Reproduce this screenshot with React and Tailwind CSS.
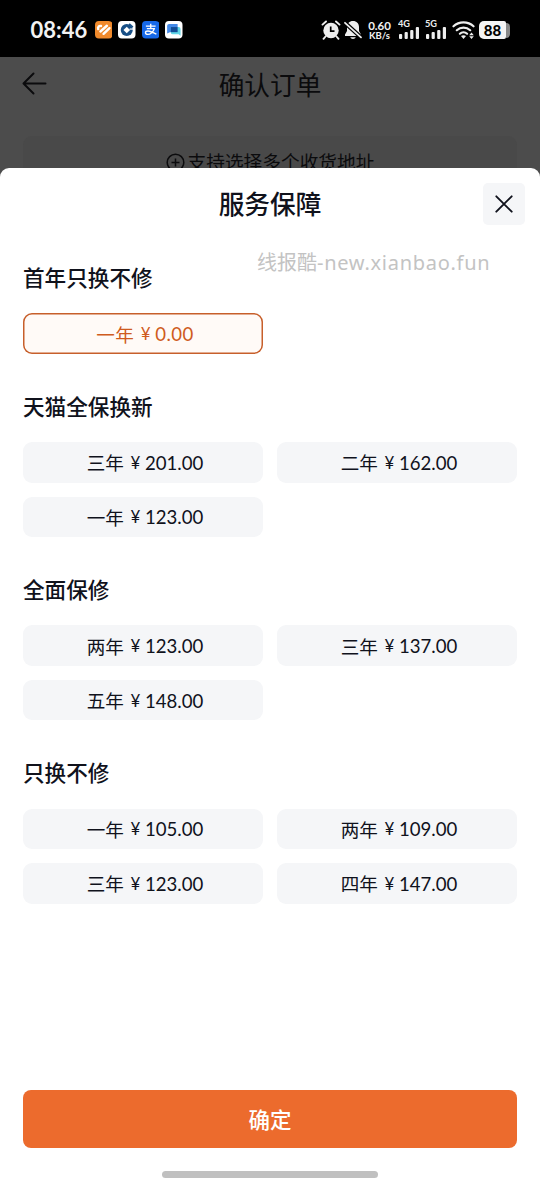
const groups = [
  { title: '首年只换不修', options: [['一年', '0.00']] },
  { title: '天猫全保换新', options: [['三年', '201.00'], ['二年', '162.00'], ['一年', '123.00']] },
  { title: '全面保修', options: [['两年', '123.00'], ['三年', '137.00'], ['五年', '148.00']] },
  { title: '只换不修', options: [['一年', '105.00'], ['两年', '109.00'], ['三年', '123.00'], ['四年', '147.00']] },
];

function AppIcons() {
  return (
    <div className="ml-[7px] flex gap-[6px]">
      <svg className="size-[17.5px]" viewBox="0 0 18 18">
        <rect width="18" height="18" rx="4" fill="#f08a2c" />
        <g fill="none" stroke="#fff" strokeWidth="2.500" strokeLinecap="round" strokeLinejoin="round">
          <path d="M3.300 8.300C2.600 6.200 4.200 4.600 6.200 5.100" />
          <path d="M5.600 10.800 12.200 4.900" />
          <path d="M8.800 13.200 14.900 7.400" />
        </g>
      </svg>
      <svg className="size-[17.5px]" viewBox="0 0 18 18">
        <rect width="18" height="18" rx="4" fill="#fff" />
        <circle cx="9" cy="9.200" r="6.200" fill="#174f86" />
        <path d="m9 5.800 3.400 3.400L9 12.600 5.600 9.200z" fill="#fff" />
        <path d="M12 8.300h4.200" stroke="#fff" strokeWidth="1.200" />
        <path d="m11.500 3 3.800 3.300" stroke="#174f86" strokeWidth="1.600" />
      </svg>
      <svg className="size-[17.5px]" viewBox="0 0 18 18">
        <rect width="18" height="18" rx="4" fill="#1769e8" />
        <path d="M4 5.200h10M9 2.800v5M5 7.900h7.600c-.9 3-3.900 5.900-6.700 5.900-3.100 0-3.200-3.500.3-3.500 2.700 0 5.300 1.800 8.600 3.200" fill="none" stroke="#fff" strokeWidth="1.400" />
      </svg>
      <svg className="size-[17.5px]" viewBox="0 0 18 18">
        <rect width="18" height="18" rx="4" fill="#fff" />
        <path d="M2.200 5a2 2 0 0 1 2-2H13v8.500H5l-2.800 1.300z" fill="#4389e8" />
        <path d="M6 6.200h8a2 2 0 0 1 2 2v7l-2-1.500H8a2 2 0 0 1-2-2z" fill="#62d7e8" />
        <path d="M6 6.200h7v5.300H6z" fill="#124d98" />
      </svg>
    </div>
  );
}

function Signal({ label }) {
  return (
    <svg className="h-[22px] w-[22px]" viewBox="0 0 22 22">
      <text x="0" y="8.300" fill="#eee" fontSize="9.200" fontWeight="700" fontFamily="Lato, sans-serif">{label}</text>
      <g fill="#eee">
        <rect x="1" y="15" width="3.200" height="5" rx="1" />
        <rect x="6.600" y="12.900" width="3.200" height="7.100" rx="1" />
        <rect x="12.200" y="10.900" width="3.200" height="9.100" rx="1" />
        <rect x="17.800" y="8" width="3.200" height="12" rx="1" />
      </g>
    </svg>
  );
}

function StatusBar() {
  return (
    <div className="flex h-[57px] shrink-0 items-center bg-black pt-[3px] text-[#f2f2f2]">
      <span className="ml-[30.500px] w-[57px] whitespace-nowrap font-['Lato'] text-[22px] leading-6 font-bold">08:46</span>
      <AppIcons />
      <div className="ml-auto flex items-center pr-[30px]">
        <svg className="h-[20px] w-[20px]" viewBox="0 0 20 20">
          <circle cx="10" cy="10.500" r="7.700" fill="#eee" />
          <path d="M1.500 4.600 5 1.500M18.500 4.600 15 1.500M4.500 16.500l-2 2.300M15.500 16.500l2 2.300" stroke="#eee" strokeWidth="1.900" strokeLinecap="round" />
          <path d="M9.700 6.500v4.600h3.800" fill="none" stroke="#000" strokeWidth="1.700" />
        </svg>
        <svg className="ml-[3px] h-[20px] w-[18px]" viewBox="0 0 18 20">
          <path d="M9 1c-3.600 0-6 2.500-6 6v4L1 14.500V16h16v-1.500L15 11V7c0-3.500-2.400-6-6-6zM6.300 17.300h5.400C11 19.500 7 19.500 6.300 17.300z" fill="#eee" />
          <path d="m1 2.800 16.500 15" stroke="#000" strokeWidth="4.200" />
          <path d="m1 2.800 16 14.500" stroke="#eee" strokeWidth="1.800" strokeLinecap="round" />
        </svg>
        <div className="ml-[5px] w-[26px] text-center font-['Lato'] font-bold">
          <div className="text-[11.500px] leading-[11px]">0.60</div>
          <div className="text-[9.500px] leading-[10px]">KB/s</div>
        </div>
        <div className="ml-[5px] flex gap-[5px]">
          <Signal label="4G" />
          <Signal label="5G" />
        </div>
        <svg className="ml-[5.500px] h-[20px] w-[23px]" viewBox="0 0 23 20">
          <g fill="none" stroke="#eee" strokeWidth="2.200" strokeLinecap="round">
            <path d="M1.500 6.300c5.600-5.200 14.400-5.200 20 0" />
            <path d="M4.800 10.200c3.900-3.500 9.500-3.500 13.400 0" />
            <path d="M7.900 13.700c2-1.800 5.200-1.800 7.200 0" />
          </g>
          <path d="M9 16c1.400-1 3.600-1 5 0l-2.500 3z" fill="#eee" />
          <path d="m19.500 12.400 2.300 2.900h-4.600zM19.500 19l2.300-2.800h-4.600z" fill="#eee" />
        </svg>
        <div className="ml-[4px] flex h-[18px] w-[31px] items-center">
          <div className="h-[18px] w-[27px] rounded-l-[5px] rounded-r-[2px] bg-[#f4f4f4] text-center font-['Lato'] text-[15px] leading-[18px] font-black text-black">88</div>
          <div className="h-[15px] w-[4px] rounded-r-[5px] bg-[#888]" />
        </div>
      </div>
    </div>
  );
}

function Option({ term, price, selected }) {
  return (
    <button
      className={
        selected
          ? 'flex h-[40.500px] items-center justify-center rounded-[9px] bg-[#fffaf7] pl-[4px] tracking-[0.400px] text-[#cf5b20] inset-ring-[1.500px] inset-ring-[#c75f2b]'
          : 'flex h-[40.500px] items-center justify-center rounded-[9px] bg-[#f5f6f8] pl-[4px] text-[#10121c]'
      }
    >
      <span className="text-[18.600px] leading-6">{term}</span>
      <span className="mt-px ml-[5.500px] w-[12px] text-center font-['Lato'] text-[17px] leading-6">¥</span>
      <span className="mt-px ml-[3.500px] font-['Lato'] text-[18.600px] leading-6">{price}</span>
    </button>
  );
}

export default function App() {
  return (
    <div className="flex h-[1188px] w-[540px] flex-col overflow-hidden bg-[#4c4c4c] font-['Noto_Sans_CJK_SC',sans-serif]">
      <StatusBar />
      <div className="h-[111px] shrink-0 overflow-hidden text-[#0b0b0d]">
        <header className="grid h-[54px] grid-cols-[60px_1fr_60px] items-center">
          <svg className="-mt-[2px] ml-[22px] size-[25px]" viewBox="0 0 25 25" fill="none" stroke="#0b0b0d" strokeWidth="2" strokeLinecap="round" strokeLinejoin="round">
            <path d="M23.500 12.500H1.500M11.500 2.500l-10 10 10 10" />
          </svg>
          <h1 className="-mt-px text-center text-[25.700px] leading-8">确认订单</h1>
        </header>
        <div className="mx-[23px] mt-[25px] flex h-[50px] items-center justify-center rounded-[9px] bg-[#494949]">
          <svg className="mt-[2px] size-[19px]" viewBox="0 0 19 19" fill="none" stroke="#0b0b0d" strokeWidth="1.500">
            <circle cx="9.500" cy="9.500" r="8.300" />
            <path d="M9.500 5.500v8M5.500 9.500h8" />
          </svg>
          <span className="ml-[3px] text-[18.700px] leading-6">支持选择多个收货地址</span>
        </div>
      </div>
      <main className="relative flex flex-1 flex-col rounded-t-[9px] bg-white px-[23px]">
        <div className="-mr-[8px] grid h-[72px] grid-cols-[34px_1fr_42px] items-center">
          <h2 className="col-start-2 -mt-[3px] text-center text-[25.700px] leading-8 font-medium text-[#10121c]">服务保障</h2>
          <button className="-mt-px flex size-[42px] items-center justify-center rounded-[5px] bg-[#f5f6f8]" aria-label="关闭">
            <svg className="size-[18px]" viewBox="0 0 18 18" stroke="#10121c" strokeWidth="1.900" strokeLinecap="round">
              <path d="m1.300 1.300 15.400 15.400M16.700 1.300 1.300 16.700" />
            </svg>
          </button>
        </div>
        <div className="absolute top-[80px] left-[257px] text-[20px] leading-7 whitespace-nowrap text-[#c3c3c3]">
          线报酷<span className="font-['Noto_Sans'] tracking-[0.720px]">-new.xianbao.fun</span>
        </div>
        <div className="mt-[21px] flex flex-col gap-[36px]">
          {groups.map((group, index) => (
            <section key={group.title}>
              <h3 className="h-[52.300px] text-[21.600px] leading-[32px] font-medium text-[#10121c]">{group.title}</h3>
              <div className="grid grid-cols-2 gap-x-[14px] gap-y-[14px]">
                {group.options.map(([term, price]) => (
                  <Option key={term} term={term} price={price} selected={index === 0} />
                ))}
              </div>
            </section>
          ))}
        </div>
        <button className="mt-auto h-[58px] rounded-[8px] bg-[#ec6b2d] text-[21.500px] leading-8 font-medium text-white">确定</button>
        <div className="mx-auto mt-[23px] mb-[10px] h-[7px] w-[216px] rounded-full bg-[#c0c0c0]" />
      </main>
    </div>
  );
}
